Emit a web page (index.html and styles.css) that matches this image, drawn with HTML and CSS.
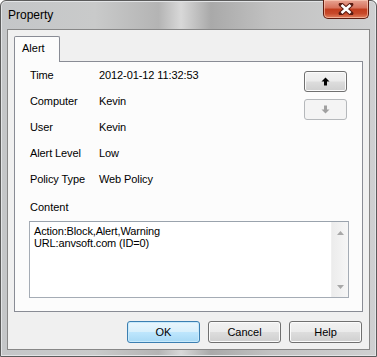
FILE: index.html
```html
<!DOCTYPE html>
<html lang="en">

<head>
    <meta charset="UTF-8">
    <title>Property</title>

    <link rel="stylesheet" href="styles.css">
</head>

<body>

    <div class="vindue">

        <div class="titellinje">
            <span class="titel">Property</span>
            <button class="luk">
                <svg width="16" height="12" viewBox="0 0 16 12">
                    <path d="M3 1.5 L13 10.5 M13 1.5 L3 10.5" stroke="#5a1a10" stroke-width="4.6" stroke-linecap="round" />
                    <path d="M3.5 2 L12.5 10 M12.5 2 L3.5 10" stroke="#ffffff" stroke-width="2.6" />
                </svg>
            </button>
        </div>

        <div class="klient">

            <div class="faner">
                <div class="fane">Alert</div>
            </div>

            <section class="panel">

                <div class="top">
                    <div class="felter">
                        <span>Time</span><span>2012-01-12 11:32:53</span>
                        <span>Computer</span><span>Kevin</span>
                        <span>User</span><span>Kevin</span>
                        <span>Alert Level</span><span>Low</span>
                        <span>Policy Type</span><span>Web Policy</span>
                    </div>

                    <div class="pile">
                        <button class="knap pil">
                            <svg width="9" height="9" viewBox="0 0 9 9">
                                <path d="M4.5 0.5 L8.5 4.5 L6 4.5 L6 8.5 L3 8.5 L3 4.5 L0.5 4.5 Z" fill="#000" />
                            </svg>
                        </button>
                        <button class="knap pil inaktiv">
                            <svg width="9" height="9" viewBox="0 0 9 9">
                                <path d="M4.5 8.5 L8.5 4.5 L6 4.5 L6 0.5 L3 0.5 L3 4.5 L0.5 4.5 Z" fill="#a0a0a0" />
                            </svg>
                        </button>
                    </div>
                </div>

                <div class="indhold-label">Content</div>

                <div class="tekstfelt">
                    <div class="tekst">
                        Action:Block,Alert,Warning<br>
                        URL:anvsoft.com (ID=0)
                    </div>
                    <div class="rullebar">
                        <svg width="7" height="4" viewBox="0 0 7 4">
                            <path d="M0 4 L3.5 0 L7 4 Z" fill="#a8a8a8" />
                        </svg>
                        <svg width="7" height="4" viewBox="0 0 7 4">
                            <path d="M0 0 L3.5 4 L7 0 Z" fill="#a8a8a8" />
                        </svg>
                    </div>
                </div>

            </section>

            <nav class="knapper">
                <button class="knap standard">OK</button>
                <button class="knap">Cancel</button>
                <button class="knap">Help</button>
            </nav>

        </div>

    </div>

</body>

</html>
```

FILE: styles.css
```css
body {
    margin: 0;
    background: #ffffff;
    font-family: "Liberation Sans", Arial, sans-serif;
    font-size: 11px;
    color: #000;
}

.vindue {
    box-sizing: border-box;
    width: 377px;
    height: 357px;
    padding: 0 6px 6px 6px;
    border: 1px solid #5b5b5b;
    border-radius: 6px 6px 0 0;
    background: linear-gradient(90deg, #c4c6c8 0%, #c9caca 25%, #b4b4b4 42%, #d8d8d8 48%, #a9a9a9 56%, #c2c2c2 72%, #cfd0d1 100%);
    box-shadow: inset 0 0 0 1px #e2e4e6;
}

.titellinje {
    height: 28px;
    display: flex;
    justify-content: space-between;
    align-items: flex-start;
}

.titel {
    margin: 7px 0 0 1px;
    font-size: 12px;
    line-height: 14px;
    color: #000;
}

.luk {
    width: 46px;
    height: 19px;
    margin: -1px 1px 0 0;
    padding: 0;
    border: 1px solid #5e1c10;
    border-top: none;
    border-radius: 0 0 5px 5px;
    background: linear-gradient(#e8a493 0%, #d7705a 45%, #c13c1d 50%, #c8492a 75%, #e0805f 100%);
    box-shadow: inset 0 0 0 1px rgba(255, 210, 190, 0.6);
    display: flex;
    align-items: center;
    justify-content: center;
}

.klient {
    box-sizing: border-box;
    height: 321px;
    border: 1px solid #878787;
    background: #f0f0f0;
    padding: 6px 6px 0 6px;
    display: flex;
    flex-direction: column;
}

.faner {
    height: 25px;
    display: flex;
}

.fane {
    box-sizing: border-box;
    width: 46px;
    height: 26px;
    padding: 4px 0 0 7px;
    border: 1px solid #898c95;
    border-bottom: none;
    border-radius: 2px 2px 0 0;
    background: #fcfcfc;
    position: relative;
    z-index: 1;
    line-height: 14px;
}

.panel {
    box-sizing: border-box;
    height: 251px;
    border: 1px solid #898c95;
    background: #fcfcfc;
    padding: 0 13px 0 14px;
}

.top {
    display: flex;
    justify-content: space-between;
}

.felter {
    display: grid;
    grid-template-columns: 69px auto;
    grid-auto-rows: 26px;
    line-height: 26px;
    padding-left: 1px;
    letter-spacing: -0.1px;
}

.pile {
    display: flex;
    flex-direction: column;
    gap: 7px;
    margin: 9px 2px 0 0;
}

.knap {
    box-sizing: border-box;
    height: 22px;
    width: 73px;
    padding: 0;
    border: 1px solid #707070;
    border-radius: 3px;
    background: linear-gradient(#f2f2f2 0%, #ebebeb 48%, #dddddd 52%, #cfcfcf 100%);
    box-shadow: inset 0 0 0 1px #fbfbfb;
    font-family: "Liberation Sans", Arial, sans-serif;
    font-size: 11px;
    color: #000;
    display: flex;
    align-items: center;
    justify-content: center;
}

.pil {
    width: 43px;
    height: 21px;
}

.inaktiv {
    border-color: #b5b8bb;
    background: #f4f4f4;
    box-shadow: none;
}

.standard {
    border-color: #3c7fb1;
    background: linear-gradient(#eaf6fd 0%, #d9f0fc 48%, #bee6fd 52%, #a7d9f5 100%);
    box-shadow: inset 0 0 0 1px #c8eafc;
}

.indhold-label {
    margin-top: 2px;
    height: 26px;
    line-height: 26px;
    padding-left: 1px;
}

.tekstfelt {
    box-sizing: border-box;
    margin-top: 1px;
    width: 320px;
    height: 77px;
    border: 1px solid #a5acb5;
    border-top-color: #9aa3ad;
    background: #ffffff;
    display: flex;
}

.tekst {
    flex: 1;
    padding: 3px 4px;
    line-height: 12px;
    letter-spacing: -0.15px;
}

.rullebar {
    width: 16px;
    background: linear-gradient(90deg, #ececec, #f6f6f6);
    border-left: 1px solid #f0f0f0;
    display: flex;
    flex-direction: column;
    justify-content: space-between;
    align-items: center;
    padding: 9px 0 8px 0;
}

.knapper {
    margin-top: 9px;
    display: flex;
    justify-content: flex-end;
    gap: 8px;
    padding-right: 1px;
}
```
